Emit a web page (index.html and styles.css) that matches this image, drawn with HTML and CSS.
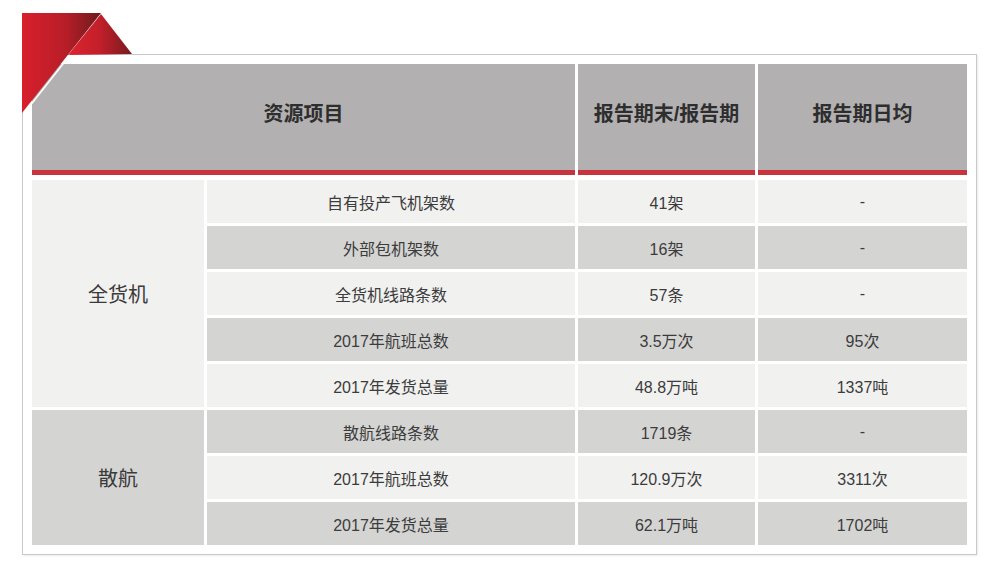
FILE: index.html
```html
<!DOCTYPE html>
<html lang="zh-CN">
<head>
<meta charset="utf-8">
<title>资源项目</title>
<link rel="stylesheet" href="styles.css">
</head>
<body>
<div class="page">
  <div class="frame">
    <div class="head">
      <div class="hcell hcell-wide">资源项目</div>
      <div class="hcell">报告期末/报告期</div>
      <div class="hcell">报告期日均</div>
    </div>
    <div class="body">
      <div class="group light g1">全货机</div>
      <div class="cell light">自有投产飞机架数</div>
      <div class="cell light">41架</div>
      <div class="cell light">-</div>

      <div class="cell dark">外部包机架数</div>
      <div class="cell dark">16架</div>
      <div class="cell dark">-</div>

      <div class="cell light">全货机线路条数</div>
      <div class="cell light">57条</div>
      <div class="cell light">-</div>

      <div class="cell dark">2017年航班总数</div>
      <div class="cell dark">3.5万次</div>
      <div class="cell dark">95次</div>

      <div class="cell light">2017年发货总量</div>
      <div class="cell light">48.8万吨</div>
      <div class="cell light">1337吨</div>

      <div class="group dark g2">散航</div>
      <div class="cell dark">散航线路条数</div>
      <div class="cell dark">1719条</div>
      <div class="cell dark">-</div>

      <div class="cell light">2017年航班总数</div>
      <div class="cell light">120.9万次</div>
      <div class="cell light">3311次</div>

      <div class="cell dark">2017年发货总量</div>
      <div class="cell dark">62.1万吨</div>
      <div class="cell dark">1702吨</div>
    </div>
  </div>
  <svg class="corner" width="140" height="120" viewBox="0 0 140 120" aria-hidden="true">
    <defs>
      <linearGradient id="ga" x1="22" y1="0" x2="101" y2="0" gradientUnits="userSpaceOnUse">
        <stop offset="0" stop-color="#d81f2c"/>
        <stop offset="0.55" stop-color="#b81e28"/>
        <stop offset="1" stop-color="#6c1a1d"/>
      </linearGradient>
      <linearGradient id="gb" x1="68" y1="0" x2="132" y2="0" gradientUnits="userSpaceOnUse">
        <stop offset="0" stop-color="#dc2430"/>
        <stop offset="0.5" stop-color="#c21f2a"/>
        <stop offset="1" stop-color="#761b1f"/>
      </linearGradient>
    </defs>
    <polygon points="22,13 101,13 22,113" fill="url(#ga)"/>
    <polygon points="101,14 132,54 68,55" fill="url(#gb)"/>
    <line x1="70" y1="55" x2="23.5" y2="114" stroke="#ffffff" stroke-width="1.6"/>
  </svg>
</div>
</body>
</html>
```

FILE: styles.css
```css
html, body {
  margin: 0;
  padding: 0;
  background: #ffffff;
}

body {
  font-family: "Liberation Sans", "Noto Sans CJK SC", sans-serif;
  color: #3a3a3a;
}

.page {
  position: relative;
  width: 1000px;
  height: 570px;
  padding: 54px 0 0 22px;
  box-sizing: border-box;
}

.frame {
  width: 955px;
  box-sizing: border-box;
  border: 1px solid #c9c9c9;
  box-shadow: 1px 1px 2px rgba(0, 0, 0, 0.08);
  padding: 9px;
  background: #ffffff;
}

.head {
  display: grid;
  grid-template-columns: 543px 177px 209px;
  column-gap: 3px;
  margin-bottom: 5px;
}

.hcell {
  box-sizing: content-box;
  height: 96px;
  background: #b2b0b1;
  border-bottom: 5px solid #c8343d;
  display: flex;
  align-items: center;
  justify-content: center;
  padding-bottom: 10px;
  font-size: 20px;
  font-weight: bold;
  color: #2e2e2e;
}

.body {
  display: grid;
  grid-template-columns: 172px 368px 177px 209px;
  grid-auto-rows: 43px;
  gap: 3px;
}

.cell {
  display: flex;
  align-items: center;
  justify-content: center;
  font-size: 16px;
  color: #3c3c3c;
}

.group {
  display: flex;
  align-items: center;
  justify-content: center;
  font-size: 20px;
  color: #3a3a3a;
  grid-column: 1;
}

.g1 {
  grid-row: 1 / span 5;
}

.g2 {
  grid-row: 6 / span 3;
}

.light {
  background: #f1f1f0;
}

.dark {
  background: #d4d4d3;
}

.corner {
  position: absolute;
  left: 0;
  top: 0;
}
```
